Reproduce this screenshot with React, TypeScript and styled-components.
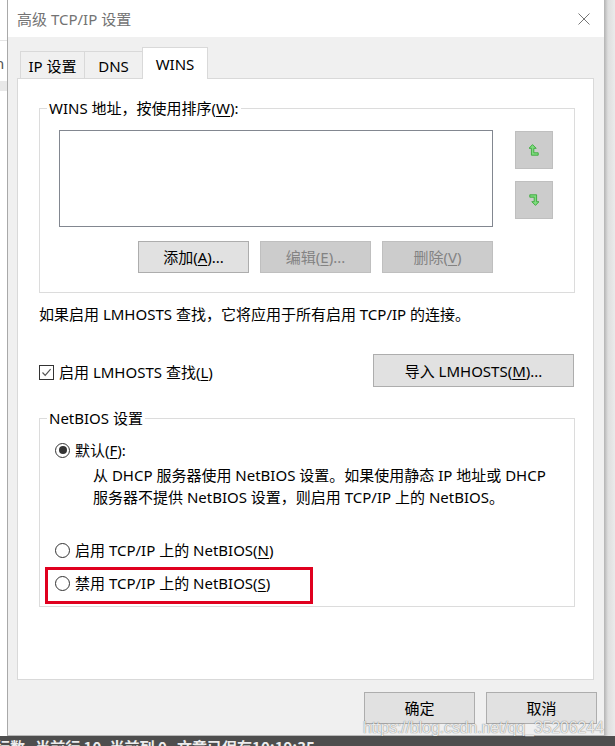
import React from "react";
import styled, { createGlobalStyle } from "styled-components";

const GlobalStyle = createGlobalStyle`
  html, body {
    margin: 0;
    padding: 0;
  }
  body {
    width: 615px;
    height: 746px;
    overflow: hidden;
    background: #fff;
    font-family: "Noto Sans", "Noto Sans CJK SC", sans-serif;
    font-size: 15px;
    color: #000;
  }
  u {
    text-decoration-thickness: 1px;
    text-underline-offset: 2px;
  }
`;

const Screen = styled.div`
  position: relative;
  width: 615px;
  height: 746px;
  display: grid;
  grid-template-rows: 736px 10px;
  overflow: hidden;
`;

const Desk = styled.div`
  display: flex;
`;

const LeftStrip = styled.div`
  width: 7px;
  display: flex;
  flex-direction: column;
  overflow: hidden;
  background: #fff;
`;

const SideLine = styled.div`
  margin-top: 40px;
  height: 1px;
  background: #e4e4e4;
`;

const SideText = styled.div`
  margin-top: 12px;
  margin-left: -5px;
  line-height: 20px;
  color: #555;
`;

const SideBand = styled.div`
  margin-top: 8px;
  height: 10px;
  background: #e8e8e8;
`;

const RightShadow = styled.div`
  width: 10px;
  background: linear-gradient(to right, #bdbdbd, #dedede 3px, #ebebeb);
`;

const Window = styled.div`
  width: 598px;
  box-sizing: border-box;
  border-left: 1px solid #a9a9a9;
  border-right: 1px solid #b8b8b8;
  border-bottom: 1px solid #b8b8b8;
  background: #f0f0f0;
  display: flex;
  flex-direction: column;
`;

const TitleBar = styled.div`
  height: 37px;
  background: #fff;
  display: flex;
  align-items: center;
  justify-content: space-between;
  padding: 0 14px 0 9px;
`;

const Title = styled.div`
  color: #737373;
  font-size: 15px;
  line-height: 20px;
`;

const Body = styled.div`
  flex: 1;
  display: flex;
  flex-direction: column;
  padding: 10px 10px 0 9px;
`;

const TabStrip = styled.div`
  display: flex;
  align-items: flex-end;
  margin: 0 0 -1px 3px;
`;

const Tab = styled.div<{ $active?: boolean; $w: number }>`
  position: relative;
  z-index: ${(p) => (p.$active ? 1 : 0)};
  width: ${(p) => p.$w}px;
  height: ${(p) => (p.$active ? 32 : 27)}px;
  margin-bottom: ${(p) => (p.$active ? 0 : 1)}px;
  margin-left: -1px;
  box-sizing: border-box;
  border: 1px solid #d9d9d9;
  border-bottom: none;
  background: ${(p) => (p.$active ? "#fff" : "#f0f0f0")};
  display: flex;
  align-items: center;
  justify-content: center;
  padding-top: ${(p) => (p.$active ? 0 : 2)}px;
  line-height: 20px;
  &:first-child {
    margin-left: 0;
  }
`;

const Panel = styled.div`
  height: 602px;
  box-sizing: border-box;
  border: 1px solid #d9d9d9;
  background: #fff;
  padding: 19px 18px 0 21px;
  display: flex;
  flex-direction: column;
`;

const Group = styled.fieldset`
  margin: 0;
  padding: 0;
  min-width: 0;
  border: 1px solid #dcdcdc;
`;

const Legend = styled.legend`
  margin-left: 7px;
  padding: 0 2px;
  line-height: 20px;
`;

const GroupBody = styled.div<{ $pad: string }>`
  padding: ${(p) => p.$pad};
  display: flex;
  flex-direction: column;
`;

const ListRow = styled.div`
  display: flex;
  gap: 22px;
`;

const ListBox = styled.div`
  width: 434px;
  height: 97px;
  box-sizing: border-box;
  border: 1px solid #828790;
  background: #fff;
`;

const OrderColumn = styled.div`
  margin-top: 1px;
  display: flex;
  flex-direction: column;
  gap: 12px;
`;

const OrderButton = styled.div`
  width: 38px;
  height: 38px;
  box-sizing: border-box;
  border: 1px solid #bfbfbf;
  background: #cccccc;
  display: flex;
  align-items: center;
  justify-content: center;
`;

const ActionRow = styled.div`
  width: 434px;
  margin-top: 14px;
  display: flex;
  justify-content: flex-end;
  gap: 11px;
`;

const Button = styled.div<{ $w?: number; $h?: number; $disabled?: boolean }>`
  width: ${(p) => p.$w ?? 111}px;
  height: ${(p) => p.$h ?? 32}px;
  box-sizing: border-box;
  border: 1px solid ${(p) => (p.$disabled ? "#bfbfbf" : "#adadad")};
  background: ${(p) => (p.$disabled ? "#cccccc" : "#e1e1e1")};
  color: ${(p) => (p.$disabled ? "#838383" : "#000")};
  display: flex;
  align-items: center;
  justify-content: center;
  line-height: 20px;
`;

const Info = styled.div`
  margin-top: 11px;
  line-height: 20px;
`;

const LmRow = styled.div`
  margin: 30px 1px 0 0;
  display: flex;
  align-items: center;
  justify-content: space-between;
`;

const CheckLabel = styled.div`
  display: flex;
  align-items: center;
  gap: 5px;
  line-height: 20px;
  margin-top: 3px;
`;

const CheckBox = styled.div`
  width: 15px;
  height: 15px;
  box-sizing: border-box;
  border: 1px solid #333;
  background: #fff;
  display: flex;
  align-items: center;
  justify-content: center;
`;

const NetGroup = styled(Group)`
  margin-top: 21px;
`;

const RadioRow = styled.div<{ $gapTop?: number }>`
  display: flex;
  align-items: center;
  gap: 5px;
  line-height: 22px;
  margin-top: ${(p) => p.$gapTop ?? 0}px;
`;

const Radio = styled.div<{ $checked?: boolean }>`
  width: 15px;
  height: 15px;
  box-sizing: border-box;
  border-radius: 50%;
  border: 1px solid #333;
  background: #fff;
  display: flex;
  align-items: center;
  justify-content: center;
  &::after {
    content: "";
    display: ${(p) => (p.$checked ? "block" : "none")};
    width: 8px;
    height: 8px;
    border-radius: 50%;
    background: #333;
  }
`;

const Description = styled.div`
  margin: 3px 0 0 38px;
  line-height: 22px;
`;

const Highlight = styled.div`
  width: 268px;
  height: 37px;
  box-sizing: border-box;
  margin: 6px 0 0 -10px;
  padding: 2px 0 0 7px;
  border: 3px solid #e0001f;
`;

const Footer = styled.div`
  margin: 12px -3px 0 0;
  display: flex;
  justify-content: flex-end;
  gap: 11px;
`;

const StatusBar = styled.div`
  background: #4e4e4e;
  overflow: hidden;
`;

const StatusText = styled.div`
  margin: 3px 0 0 -5px;
  white-space: pre;
  color: #ececec;
  font-weight: bold;
  font-size: 15px;
  line-height: 16px;
  font-family: "Noto Sans CJK SC", sans-serif;
`;

const Watermark = styled.div`
  position: absolute;
  left: 363px;
  top: 719px;
  font-family: "Liberation Sans", Arial, sans-serif;
  font-size: 15.7px;
  line-height: 18px;
  color: rgba(255, 255, 255, 0.85);
  text-shadow: 0 0 1px rgba(60, 60, 60, 0.55), 0 0 1px rgba(60, 60, 60, 0.4);
  white-space: nowrap;
`;

const CloseIcon = () => (
  <svg width="12" height="12" viewBox="0 0 12 12">
    <path d="M0.5 0.5 L11.5 11.5 M11.5 0.5 L0.5 11.5" stroke="#777" strokeWidth="1" fill="none" />
  </svg>
);

const MoveArrow = ({ down }: { down?: boolean }) => (
  <svg
    width="10"
    height="12"
    viewBox="0 0 10 12"
    style={down ? { transform: "rotate(180deg)" } : undefined}
  >
    <path
      d="M3.5 0.6 L7.2 4.3 L4.8 4.3 L4.8 8.8 L9.2 8.8 L9.2 11.2 L2.4 11.2 L2.4 4.3 L0 4.3 Z"
      fill="#7fdc7f"
      stroke="#3aa83a"
      strokeWidth="0.9"
      strokeLinejoin="round"
    />
  </svg>
);

const CheckMark = () => (
  <svg width="11" height="11" viewBox="0 0 11 11">
    <path d="M1.5 5.5 L4.2 8.3 L9.6 2.2" stroke="#555" strokeWidth="1.2" fill="none" />
  </svg>
);

export default function App() {
  return (
    <>
      <GlobalStyle />
      <Screen>
        <Desk>
          <LeftStrip>
            <SideLine />
            <SideText>n</SideText>
            <SideBand />
          </LeftStrip>
          <Window>
            <TitleBar>
              <Title>高级 TCP/IP 设置</Title>
              <CloseIcon />
            </TitleBar>
            <Body>
              <TabStrip>
                <Tab $w={65}>IP 设置</Tab>
                <Tab $w={59}>DNS</Tab>
                <Tab $w={66} $active>
                  WINS
                </Tab>
              </TabStrip>
              <Panel>
                <Group>
                  <Legend>
                    WINS 地址，按使用排序(<u>W</u>):
                  </Legend>
                  <GroupBody $pad="12px 20px 19px 19px">
                    <ListRow>
                      <ListBox />
                      <OrderColumn>
                        <OrderButton>
                          <MoveArrow />
                        </OrderButton>
                        <OrderButton>
                          <MoveArrow down />
                        </OrderButton>
                      </OrderColumn>
                    </ListRow>
                    <ActionRow>
                      <Button>
                        添加(<u>A</u>)...
                      </Button>
                      <Button $disabled>
                        编辑(<u>E</u>)...
                      </Button>
                      <Button $disabled>
                        删除(<u>V</u>)
                      </Button>
                    </ActionRow>
                  </GroupBody>
                </Group>
                <Info>如果启用 LMHOSTS 查找，它将应用于所有启用 TCP/IP 的连接。</Info>
                <LmRow>
                  <CheckLabel>
                    <CheckBox>
                      <CheckMark />
                    </CheckBox>
                    <span>
                      启用 LMHOSTS 查找(<u>L</u>)
                    </span>
                  </CheckLabel>
                  <Button $w={201} $h={33}>
                    导入 LMHOSTS(<u>M</u>)...
                  </Button>
                </LmRow>
                <NetGroup>
                  <Legend>NetBIOS 设置</Legend>
                  <GroupBody $pad="11px 0 2px 15px">
                    <RadioRow>
                      <Radio $checked />
                      <span>
                        默认(<u>F</u>):
                      </span>
                    </RadioRow>
                    <Description>
                      从 DHCP 服务器使用 NetBIOS 设置。如果使用静态 IP 地址或 DHCP
                      <br />
                      服务器不提供 NetBIOS 设置，则启用 TCP/IP 上的 NetBIOS。
                    </Description>
                    <RadioRow $gapTop={31}>
                      <Radio />
                      <span>
                        启用 TCP/IP 上的 NetBIOS(<u>N</u>)
                      </span>
                    </RadioRow>
                    <Highlight>
                      <RadioRow>
                        <Radio />
                        <span>
                          禁用 TCP/IP 上的 NetBIOS(<u>S</u>)
                        </span>
                      </RadioRow>
                    </Highlight>
                  </GroupBody>
                </NetGroup>
              </Panel>
              <Footer>
                <Button>确定</Button>
                <Button>取消</Button>
              </Footer>
            </Body>
          </Window>
          <RightShadow />
        </Desk>
        <StatusBar>
          <StatusText>{"行数   当前行 10, 当前列 0   文章已保存10:19:35"}</StatusText>
        </StatusBar>
        <Watermark>https://blog.csdn.net/qq_35206244</Watermark>
      </Screen>
    </>
  );
}
